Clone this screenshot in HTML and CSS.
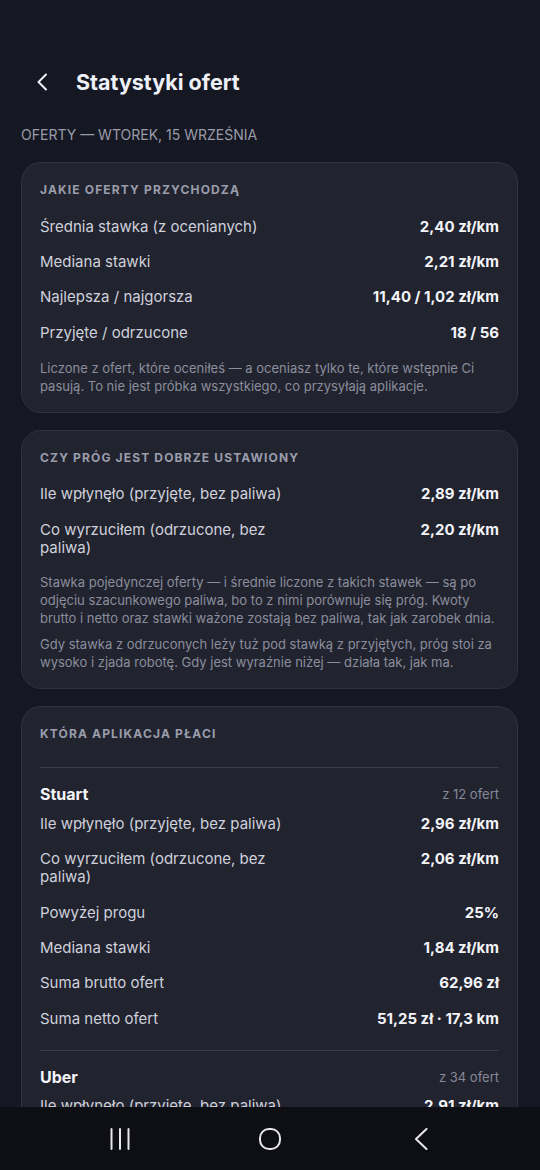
FILE: index.html
```html
<!DOCTYPE html>
<html lang="pl">
<head>
    <meta charset="UTF-8">
    <meta name="viewport" content="width=device-width, initial-scale=1.0">
    <title>Statystyki ofert</title>
    <link rel="stylesheet" href="styles.css">
</head>
<body>
    <div class="screen">
        <div class="content">
            <div class="topbar">
                <svg class="back-icon" width="12" height="18" viewBox="0 0 12 18">
                    <path d="M10 1.5 L2.5 9 L10 16.5" fill="none" stroke="#eef0f8" stroke-width="2" stroke-linecap="round" stroke-linejoin="round"/>
                </svg>
                <h1 class="page-title">Statystyki ofert</h1>
            </div>

            <div class="day-label">Oferty — wtorek, 15 września</div>

            <div class="card">
                <h2 class="card-title">Jakie oferty przychodzą</h2>
                <div class="row"><span class="label">Średnia stawka (z ocenianych)</span><span class="value">2,40 zł/km</span></div>
                <div class="row"><span class="label">Mediana stawki</span><span class="value">2,21 zł/km</span></div>
                <div class="row"><span class="label">Najlepsza / najgorsza</span><span class="value">11,40 / 1,02 zł/km</span></div>
                <div class="row"><span class="label">Przyjęte / odrzucone</span><span class="value">18 / 56</span></div>
                <p class="note">Liczone z ofert, które oceniłeś — a oceniasz tylko te, które wstępnie Ci pasują. To nie jest próbka wszystkiego, co przysyłają aplikacje.</p>
            </div>

            <div class="card">
                <h2 class="card-title">Czy próg jest dobrze ustawiony</h2>
                <div class="row"><span class="label">Ile wpłynęło (przyjęte, bez paliwa)</span><span class="value">2,89 zł/km</span></div>
                <div class="row"><span class="label">Co wyrzuciłem (odrzucone, bez paliwa)</span><span class="value">2,20 zł/km</span></div>
                <p class="note">Stawka pojedynczej oferty — i średnie liczone z takich stawek — są po odjęciu szacunkowego paliwa, bo to z nimi porównuje się próg. Kwoty brutto i netto oraz stawki ważone zostają bez paliwa, tak jak zarobek dnia.</p>
                <p class="note">Gdy stawka z odrzuconych leży tuż pod stawką z przyjętych, próg stoi za wysoko i zjada robotę. Gdy jest wyraźnie niżej — działa tak, jak ma.</p>
            </div>

            <div class="card">
                <h2 class="card-title">Która aplikacja płaci</h2>
                <div class="app-list">
                    <div class="app">
                        <div class="app-head"><span class="app-name">Stuart</span><span class="app-count">z 12 ofert</span></div>
                        <div class="row"><span class="label">Ile wpłynęło (przyjęte, bez paliwa)</span><span class="value">2,96 zł/km</span></div>
                        <div class="row"><span class="label">Co wyrzuciłem (odrzucone, bez paliwa)</span><span class="value">2,06 zł/km</span></div>
                        <div class="row"><span class="label">Powyżej progu</span><span class="value">25%</span></div>
                        <div class="row"><span class="label">Mediana stawki</span><span class="value">1,84 zł/km</span></div>
                        <div class="row"><span class="label">Suma brutto ofert</span><span class="value">62,96 zł</span></div>
                        <div class="row"><span class="label">Suma netto ofert</span><span class="value">51,25 zł · 17,3 km</span></div>
                    </div>
                    <div class="app">
                        <div class="app-head"><span class="app-name">Uber</span><span class="app-count">z 34 ofert</span></div>
                        <div class="row"><span class="label">Ile wpłynęło (przyjęte, bez paliwa)</span><span class="value">2,91 zł/km</span></div>
                    </div>
                </div>
            </div>

            <div class="scroll-thumb"></div>
        </div>

        <div class="navbar">
            <svg class="nav-recents" width="20" height="22" viewBox="0 0 20 22">
                <path d="M1.5 1 V21 M10 1 V21 M18.5 1 V21" stroke="#e8e8ec" stroke-width="2" stroke-linecap="round"/>
            </svg>
            <svg class="nav-home" width="22" height="22" viewBox="0 0 22 22">
                <rect x="1" y="1" width="20" height="20" rx="9" fill="none" stroke="#e8e8ec" stroke-width="2"/>
            </svg>
            <svg width="14" height="22" viewBox="0 0 14 22">
                <path d="M12.5 1 L2 11 L12.5 21" fill="none" stroke="#e8e8ec" stroke-width="2" stroke-linecap="round" stroke-linejoin="round"/>
            </svg>
        </div>
    </div>
</body>
</html>
```

FILE: styles.css
```css
body {
    margin: 0;
    padding: 0;
    background-color: #151722;
    font-family: Inter, "Noto Sans", sans-serif;
    color: #eef0f8;
}
.screen {
    height: 1170px;
    display: flex;
    flex-direction: column;
    overflow: hidden;
}
.content {
    flex: 1;
    overflow: hidden;
    padding: 0 22px 0 21px;
    position: relative;
}
.topbar {
    display: flex;
    align-items: center;
    height: 44px;
    margin: 60px 0 0 15px;
}
.back-icon {
    margin-right: 28px;
}
.page-title {
    margin: 0;
    font-size: 21.5px;
    font-weight: 700;
    color: #eef0f8;
}
.day-label {
    margin: 22px 0 18px 0;
    font-size: 14px;
    line-height: 18px;
    text-transform: uppercase;
    color: #9a9cab;
}
.card {
    background-color: #21232f;
    border: 1px solid #2f3242;
    border-radius: 20px;
    padding: 19px 18px 17px 18px;
    margin-bottom: 17px;
}
.card-title {
    margin: 0 0 11px 0;
    font-size: 12px;
    line-height: 16px;
    font-weight: 700;
    letter-spacing: 1.15px;
    text-transform: uppercase;
    color: #9a9dac;
}
.row {
    display: flex;
    justify-content: space-between;
    align-items: flex-start;
    padding: 8.7px 0;
    font-size: 15px;
    line-height: 18px;
}
.label {
    max-width: 60%;
    color: #cfd1db;
}
.value {
    font-weight: 700;
    color: #f3f4f8;
    white-space: nowrap;
}
.note {
    margin: 8px 0 0 0;
    font-size: 13px;
    line-height: 18px;
    color: #8b8e9c;
}
.app-list {
    margin-top: 25px;
}
.app {
    border-top: 1px solid #393c4a;
    padding: 15px 0 13px 0;
}
.app-head {
    display: flex;
    justify-content: space-between;
    align-items: center;
    height: 22px;
    margin-bottom: 1px;
}
.app-name {
    font-size: 16px;
    font-weight: 700;
    color: #f3f4f8;
}
.app-count {
    font-size: 13px;
    color: #868998;
}
.scroll-thumb {
    position: absolute;
    top: 264px;
    right: -22px;
    width: 6px;
    height: 168px;
    border-radius: 4px 0 0 4px;
    background-color: #3a3d49;
}
.navbar {
    height: 63px;
    flex-shrink: 0;
    background-color: #0e0f15;
    display: flex;
    align-items: center;
    padding-left: 110px;
}
.nav-recents {
    margin-right: 129px;
}
.nav-home {
    margin-right: 133px;
}
```
